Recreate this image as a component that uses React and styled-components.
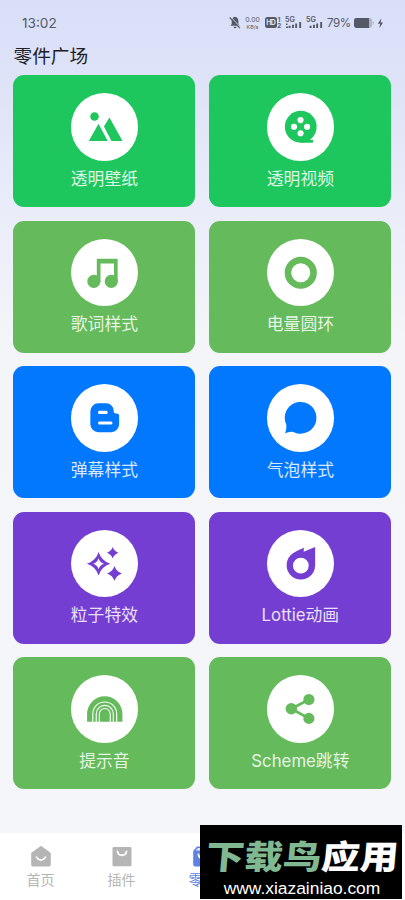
import styled, { createGlobalStyle } from "styled-components";

const GlobalStyle = createGlobalStyle`
    * {
        box-sizing: border-box;
    }
    body {
        margin: 0;
        font-family: Inter, "Noto Sans CJK SC", sans-serif;
    }
`;

const Screen = styled.div`
    position: relative;
    display: flex;
    flex-direction: column;
    width: 405px;
    height: 900px;
    overflow: hidden;
    background: linear-gradient(180deg, #d9dff9 0px, #dfe4f7 100px, #eaedf9 210px, #f3f5f8 340px, #f4f6f9 100%);
`;

const StatusBar = styled.div`
    display: flex;
    align-items: center;
    justify-content: space-between;
    height: 45px;
    padding: 0 21px 0 22px;
    color: #555967;
`;

const Clock = styled.span`
    font-size: 13.6px;
    line-height: 16px;
`;

const StatusIcons = styled.div`
    display: flex;
    align-items: center;
    height: 16px;
`;

const Speed = styled.span`
    display: flex;
    flex-direction: column;
    align-items: center;
    width: 15px;
    margin: 0 4.5px 0 4px;
    font-size: 6.8px;
    line-height: 8px;

    small {
        font-size: 5.4px;
        line-height: 6px;
    }
`;

const Percent = styled.span`
    margin: 0 4px;
    width: 23px;
    font-family: Inter, sans-serif;
    font-size: 11.6px;
    letter-spacing: -0.4px;
    white-space: nowrap;
`;

const Title = styled.h1`
    margin: 0 0 6px 13.5px;
    color: #1d2026;
    font-size: 18.7px;
    font-weight: 400;
    line-height: 24px;
`;

const Grid = styled.div`
    display: grid;
    grid-template-columns: 182px 182px;
    grid-auto-rows: 132px;
    gap: 13.5px 14px;
    padding-left: 13.4px;
`;

const Card = styled.div`
    display: flex;
    flex-direction: column;
    align-items: center;
    padding-top: 18px;
    border-radius: 11px;
    background: ${(props) => props.$color};
    color: ${(props) => props.$color};
`;

const Circle = styled.div`
    width: 67.5px;
    height: 67.5px;
    border-radius: 50%;
    background: #fff;

    svg {
        display: block;
        width: 100%;
        height: 100%;
    }
`;

const Label = styled.span`
    margin-top: 6px;
    color: rgba(255, 255, 255, 0.86);
    font-size: 16.8px;
    font-weight: 400;
    line-height: 24px;
    white-space: nowrap;
`;

const TabBar = styled.nav`
    display: flex;
    height: 67.5px;
    margin-top: auto;
    background: #fff;
`;

const Tab = styled.div`
    display: flex;
    flex: 1;
    flex-direction: column;
    align-items: center;
    padding-top: 12px;
    color: ${(props) => (props.$active ? "#5b83e6" : "#b5b5b5")};
    font-size: 14px;
    line-height: 20px;

    svg {
        display: block;
        margin-bottom: 3px;
    }
`;

const Watermark = styled.div`
    position: absolute;
    left: 200px;
    top: 825px;
    display: flex;
    flex-direction: column;
    align-items: center;
    width: 202px;
    height: 74px;
    padding: 13px 0 0 2px;
    background: #000;
    color: #fff;
`;

const Brand = styled.div`
    font-size: 38.5px;
    font-weight: 900;
    line-height: 38px;
    white-space: nowrap;
    transform: skewX(-5deg) scaleY(0.86);

    b {
        color: #80b892;
        font-weight: 900;
    }
`;

const Site = styled.div`
    margin-top: 3px;
    font-family: "Liberation Sans", Arial, sans-serif;
    font-size: 17.4px;
    line-height: 18px;
`;

const WallpaperIcon = () => (
    <svg viewBox="0 0 68 68" fill="currentColor">
        <circle cx="23.7" cy="23.7" r="4.3" />
        <path d="M18 48.3 27.7 31l9.3 17.3ZM33.2 33.7l5.5-9 13.2 23.6H40.8Z" />
    </svg>
);

const VideoIcon = () => (
    <svg viewBox="0 0 68 68" fill="currentColor">
        <circle cx="34" cy="34" r="16" />
        <path d="M34 50h12.3v-3H41l-7 1Z" />
        <g fill="#fff">
            <circle cx="33.8" cy="27.3" r="3.1" />
            <circle cx="27.2" cy="34" r="3.1" />
            <circle cx="40.4" cy="34" r="3.1" />
            <circle cx="33.8" cy="40.5" r="3.1" />
        </g>
    </svg>
);

const MusicIcon = () => (
    <svg viewBox="0 0 68 68" fill="currentColor">
        <path d="M26 20h21v23h-3.7V24.8H29.7V43H26Z" />
        <circle cx="23" cy="42.7" r="6.6" />
        <circle cx="40.6" cy="42.7" r="6.6" />
    </svg>
);

const RingIcon = () => (
    <svg viewBox="0 0 68 68" fill="none">
        <circle cx="34" cy="34" r="12.9" stroke="currentColor" strokeWidth="6.6" />
    </svg>
);

const BloggerIcon = () => (
    <svg viewBox="0 0 68 68" fill="currentColor">
        <path d="M27.5 19.5h8a7.5 7.5 0 0 1 7.5 7.5c0 2 .7 2.8 2.6 2.8 2 0 2.9.7 2.9 2.4v8.3a8 8 0 0 1-8 8h-13a8 8 0 0 1-8-8v-13a8 8 0 0 1 8-8Z" />
        <path d="M28.8 28.6h6.6M28.8 39.3h11.4" stroke="#fff" strokeWidth="3.2" strokeLinecap="round" />
    </svg>
);

const BubbleIcon = () => (
    <svg viewBox="0 0 68 68" fill="currentColor">
        <path d="M18.2 49.8c1-3 1.6-5.3 1.2-8.9A16 16 0 1 1 27 48.5c-3.2-.9-5.9 0-8.8 1.3Z" />
    </svg>
);

const SparkleIcon = () => (
    <svg viewBox="0 0 68 68" fill="currentColor">
        <path
            fillRule="evenodd"
            d="M27.8 22.2Q30.6 31.2 39.6 34 30.6 36.8 27.8 45.8 25 36.8 16 34 25 31.2 27.8 22.2Zm0 6.3Q26.5 32.7 22.3 34q4.2 1.3 5.5 5.5 1.3-4.2 5.5-5.5-4.2-1.3-5.5-5.5Z"
        />
        <path d="M42 17.2q1.5 4.3 5.8 5.8-4.3 1.5-5.8 5.8-1.5-4.3-5.8-5.8 4.3-1.5 5.8-5.8ZM43.8 36.2q1.9 5.6 7.5 7.5-5.6 1.9-7.5 7.5-1.9-5.6-7.5-7.5 5.6-1.9 7.5-7.5Z" />
    </svg>
);

const CometIcon = () => (
    <svg viewBox="0 0 68 68" fill="currentColor">
        <path
            fillRule="evenodd"
            d="M48.5 17v18.7A14.4 14.4 0 1 1 24 25.3C27 22.2 31.5 20.5 37.2 17.8l-.3 4Zm-14.4 11a7.9 7.9 0 1 0 0 15.8 7.9 7.9 0 0 0 0-15.8Z"
        />
    </svg>
);

const RainbowIcon = () => (
    <svg viewBox="0 0 68 68" fill="none">
        <path d="M16.2 47.2v-8a17.8 17.8 0 0 1 35.6 0v8Z" fill="currentColor" />
        <path
            d="M22 47.5v-8.3a12 12 0 0 1 24 0v8.3M25.4 47.5v-8.3a8.6 8.6 0 0 1 17.2 0v8.3M28.5 47.5v-8.3a5.5 5.5 0 0 1 11 0v8.3"
            stroke="#fff"
            strokeWidth="1.1"
        />
    </svg>
);

const ShareIcon = () => (
    <svg viewBox="0 0 68 68" fill="currentColor">
        <circle cx="24.5" cy="34" r="5.8" />
        <circle cx="42.2" cy="24.7" r="5.6" />
        <circle cx="42.2" cy="43.7" r="5.6" />
        <path d="M42.2 24.7 24.5 34l17.7 9.7" fill="none" stroke="currentColor" strokeWidth="2.7" />
    </svg>
);

const Signal = ({ weak }) => (
    <svg width="17" height="13" viewBox="0 0 17 13" fill="currentColor">
        <text x="0" y="5.8" fontSize="7.2" fontWeight="600" fontFamily="Inter, sans-serif">
            5G
        </text>
        {weak ? <path d="M1 7.5h1.5V9H1ZM1 10.5h2V12H1Z" /> : null}
        <path d="M3.6 9.7h2V12h-2ZM7 8.8h1.9V12H7ZM10.2 7.6h1.9V12h-1.9ZM14.2 6h1.9v6h-1.9Z" />
    </svg>
);

const StatusGap = styled.span`
    width: ${(props) => props.$size}px;
`;

const StatusGlyphs = () => (
    <StatusIcons>
        <svg width="12" height="13" viewBox="0 0 12 13" fill="currentColor">
            <path d="M6 .8c2.3.5 3.4 2 3.4 4.2v3l1.4 1.8H1.4L2.7 8V5C2.7 2.8 3.8 1.3 6 .8ZM4.6 10.8h3a1.5 1.5 0 0 1-3 0Z" />
            <path d="m1.6.9 10.2 10.6" stroke="#dbe1f8" strokeWidth="1" />
            <path d="m.7 1.5 10.2 10.6" stroke="currentColor" strokeWidth="1.2" />
        </svg>
        <Speed>
            0.00<small>KB/s</small>
        </Speed>
        <svg width="17" height="13" viewBox="0 0 17 13" fill="currentColor" fontFamily="Inter, sans-serif" fontWeight="700">
            <rect x="0" y="1" width="12" height="11" rx="2.5" />
            <text x="1.3" y="9.1" fontSize="7" fill="#dfe4f7" textLength="9.5">HD</text>
            <text x="12.8" y="6" fontSize="6.2">1</text>
            <text x="12.2" y="12.2" fontSize="6.2">2</text>
        </svg>
        <StatusGap $size={3} />
        <Signal weak />
        <StatusGap $size={4.5} />
        <Signal />
        <Percent>79%</Percent>
        <svg width="30" height="12" viewBox="0 0 30 12" fill="currentColor">
            <rect x="0" y="1" width="18" height="10" rx="2.4" fill="#b1b5c3" />
            <path d="M2.4 1H15v10H2.4A2.4 2.4 0 0 1 0 8.6V3.4A2.4 2.4 0 0 1 2.4 1Z" />
            <path d="M18.7 4v4q1.2-.5 1.2-2t-1.2-2Z" fill="#b1b5c3" />
            <path d="M27.3 1.3 23.8 6.7h2.3l-.6 4.2 3.5-5.5h-2.3Z" />
        </svg>
    </StatusIcons>
);

const HomeIcon = () => (
    <svg width="20" height="22" viewBox="0 0 20 22">
        <path d="M10 .8 19.2 7.4q.6.4.6 1.2V19.7q0 1.7-1.7 1.7H1.9Q.2 21.4.2 19.7V8.6q0-.8.6-1.2Z" fill="currentColor" />
        <path d="M5.5 12.2q4.5 6 9 0" fill="none" stroke="#fff" strokeWidth="1.8" strokeLinecap="round" />
    </svg>
);

const PluginIcon = () => (
    <svg width="20" height="22" viewBox="0 0 20 22">
        <rect x=".5" y="2" width="19" height="19.3" rx="1.3" fill="currentColor" />
        <path d="M5.5 6.5c.7 5 8.3 5 9 0" fill="none" stroke="#fff" strokeWidth="1.8" strokeLinecap="round" />
    </svg>
);

const PartsIcon = () => (
    <svg width="20" height="22" viewBox="0 0 20 22">
        <path d="M4 1.5h12L19.8 6v13.5q0 2-2 2H2.2q-2 0-2-2V6Z" fill="currentColor" />
        <path d="M2.5 5.5 5 3h10l2.5 2.5Z" fill="#dce6ff" />
        <path d="M5.5 9.5c.7 5.5 8.3 5.5 9 0" fill="none" stroke="#fff" strokeWidth="1.8" strokeLinecap="round" />
    </svg>
);

const UserIcon = () => (
    <svg width="20" height="22" viewBox="0 0 20 22" fill="currentColor">
        <circle cx="10" cy="6.5" r="5" />
        <path d="M1 21a9 8 0 0 1 18 0Z" />
    </svg>
);

const cards = [
    { label: "透明壁纸", color: "#1dc75e", Icon: WallpaperIcon },
    { label: "透明视频", color: "#1dc75e", Icon: VideoIcon },
    { label: "歌词样式", color: "#65bb5c", Icon: MusicIcon },
    { label: "电量圆环", color: "#65bb5c", Icon: RingIcon },
    { label: "弹幕样式", color: "#0278ff", Icon: BloggerIcon },
    { label: "气泡样式", color: "#0278ff", Icon: BubbleIcon },
    { label: "粒子特效", color: "#753ed2", Icon: SparkleIcon },
    { label: "Lottie动画", color: "#753ed2", Icon: CometIcon },
    { label: "提示音", color: "#65bb5c", Icon: RainbowIcon },
    { label: "Scheme跳转", color: "#65bb5c", Icon: ShareIcon },
];

const tabs = [
    { label: "首页", Icon: HomeIcon },
    { label: "插件", Icon: PluginIcon },
    { label: "零件", Icon: PartsIcon, active: true },
    { label: "", Icon: UserIcon },
    { label: "", Icon: UserIcon },
];

const App = () => (
    <>
        <GlobalStyle />
        <Screen>
            <StatusBar>
                <Clock>13:02</Clock>
                <StatusGlyphs />
            </StatusBar>
            <Title>零件广场</Title>
            <Grid>
                {cards.map(({ label, color, Icon }) => (
                    <Card key={label} $color={color}>
                        <Circle>
                            <Icon />
                        </Circle>
                        <Label>{label}</Label>
                    </Card>
                ))}
            </Grid>
            <TabBar>
                {tabs.map(({ label, Icon, active }, i) => (
                    <Tab key={i} $active={active}>
                        <Icon />
                        {label}
                    </Tab>
                ))}
            </TabBar>
            <Watermark>
                <Brand>
                    <b>下载鸟</b>应用
                </Brand>
                <Site>www.xiazainiao.com</Site>
            </Watermark>
        </Screen>
    </>
);

export default App;
